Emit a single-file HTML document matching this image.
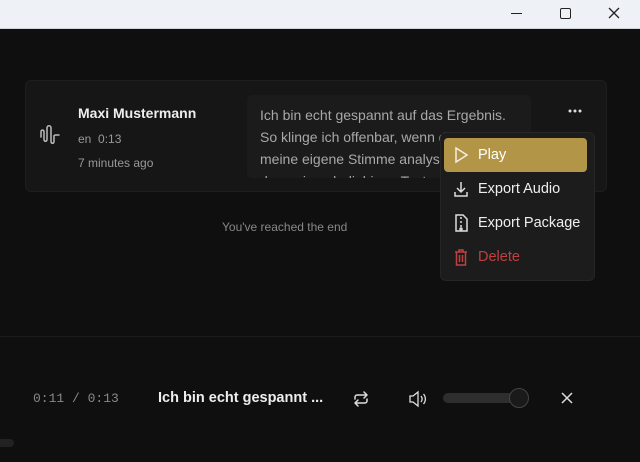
<!DOCTYPE html><html><head><style>
body{margin:0;width:640px;height:462px;overflow:hidden;background:#0f0f0f;font-family:"Liberation Sans",sans-serif;position:relative}
.a{position:absolute}
</style></head><body>
<div class="a" style="left:0;top:0;width:640px;height:28px;background:#eef1f6;border-bottom:1px solid #d0d3d8"></div>
<div class="a" style="left:511px;top:13px;width:11px;height:1px;background:#222"></div>
<div class="a" style="left:560px;top:8px;width:9px;height:9px;border:1.3px solid #222;border-radius:2px"></div>
<svg class="a" style="left:608px;top:7px" width="12" height="12"><path d="M1 1L11 11M11 1L1 11" stroke="#222" stroke-width="1.3"/></svg>
<div class="a" style="left:25px;top:80px;width:580px;height:110px;background:#161616;border:1px solid #1e1e1e;border-radius:6px"></div>
<svg class="a" style="left:38px;top:123px" width="24" height="26" fill="none" stroke="#bbb" stroke-width="1.5" stroke-linecap="round" stroke-linejoin="round"><path d="M3 14V9c0-2.5 3-2.5 3 0v7c0 3 3 3 3 0V5c0-3 4-3 4 0v13c0 3 3 3 3 0v-5c0-1 1-1 2-1h3"/></svg>
<div class="a" style="left:78px;top:105px;color:#eee;font-size:14px;font-weight:bold">Maxi Mustermann</div>
<div class="a" style="left:78px;top:132px;color:#999;font-size:12px">en&nbsp;&nbsp;0:13</div>
<div class="a" style="left:78px;top:156px;color:#999;font-size:12px">7 minutes ago</div>
<div class="a" style="left:247px;top:95px;width:284px;height:83px;background:#1b1b1b;border-radius:5px;overflow:hidden">
<div style="padding:9px 0 0 13px;color:#a8a8a8;font-size:14px;line-height:22px;white-space:nowrap">Ich bin echt gespannt auf das Ergebnis.<br>So klinge ich offenbar, wenn die KI<br>meine eigene Stimme analysiert und<br>dann einen beliebigen Text</div></div>
<svg class="a" style="left:567px;top:108px" width="16" height="6" fill="#ddd"><circle cx="3" cy="3" r="1.5"/><circle cx="8" cy="3" r="1.5"/><circle cx="13" cy="3" r="1.5"/></svg>
<div class="a" style="left:222px;top:220px;color:#888;font-size:12px">You've reached the end</div>
<div class="a" style="left:440px;top:132px;width:153px;height:147px;background:#1c1c1c;border:1px solid #262626;border-radius:6px"></div>
<div class="a" style="left:444px;top:138px;width:143px;height:34px;background:#b39547;border-radius:4px"></div>
<svg class="a" style="left:453px;top:146px" width="16" height="18" fill="none" stroke="#f5f0e0" stroke-width="1.5"><path d="M3 2l11 7-11 7z"/></svg>
<div class="a" style="left:478px;top:147px;color:#fff;font-size:14.5px">Play</div>
<svg class="a" style="left:453px;top:180px" width="16" height="18" fill="none" stroke="#ddd" stroke-width="1.5"><path d="M8 2v10M4 8l4 4 4-4M2 12v4h12v-4"/></svg>
<div class="a" style="left:478px;top:181px;color:#eee;font-size:14.5px">Export Audio</div>
<svg class="a" style="left:453px;top:214px" width="16" height="18" fill="none" stroke="#ddd" stroke-width="1.5"><path d="M3 1h7l4 4v12H3zM8 3v2M8 7v2M8 11v2"/><circle cx="8" cy="15" r="1"/></svg>
<div class="a" style="left:478px;top:215px;color:#eee;font-size:14.5px">Export Package</div>
<svg class="a" style="left:453px;top:248px" width="16" height="18" fill="none" stroke="#c0403f" stroke-width="1.5"><path d="M2 4h12M6 4V2h4v2M3.5 4v13h9V4M6.5 7v7M9.5 7v7"/></svg>
<div class="a" style="left:478px;top:249px;color:#c0403f;font-size:14.5px">Delete</div>
<div class="a" style="left:0;top:336px;width:640px;height:1px;background:#1c1c1c"></div>
<div class="a" style="left:33px;top:391px;color:#888;font-size:13px;font-family:'Liberation Mono',monospace">0:11 / 0:13</div>
<div class="a" style="left:158px;top:390px;color:#eee;font-size:14.5px;font-weight:bold">Ich bin echt gespannt ...</div>
<svg class="a" style="left:352px;top:389px" width="18" height="20" fill="none" stroke="#ddd" stroke-width="1.5" stroke-linecap="round" stroke-linejoin="round"><path d="M3 10V8c0-1 1-2 2-2h10M12 3l3 3-3 3M15 10v2c0 1-1 2-2 2H3M6 17l-3-3 3-3"/></svg>
<svg class="a" style="left:408px;top:390px" width="20" height="18" fill="none" stroke="#ddd" stroke-width="1.3"><path d="M2 6h3l5-4v14l-5-4H2zM13 6c1.5 2 1.5 4 0 6M15.5 4c2.5 3 2.5 7 0 10"/></svg>
<div class="a" style="left:443px;top:393px;width:80px;height:10px;background:#2e2e2e;border-radius:5px"></div>
<div class="a" style="left:509px;top:388px;width:18px;height:18px;border:1.5px solid #444;background:#1a1a1a;border-radius:50%"></div>
<svg class="a" style="left:561px;top:392px" width="12" height="12"><path d="M1 1L11 11M11 1L1 11" stroke="#ddd" stroke-width="1.5"/></svg>
<div class="a" style="left:-6px;top:439px;width:20px;height:8px;background:#222;border-radius:4px"></div>
</body></html>
